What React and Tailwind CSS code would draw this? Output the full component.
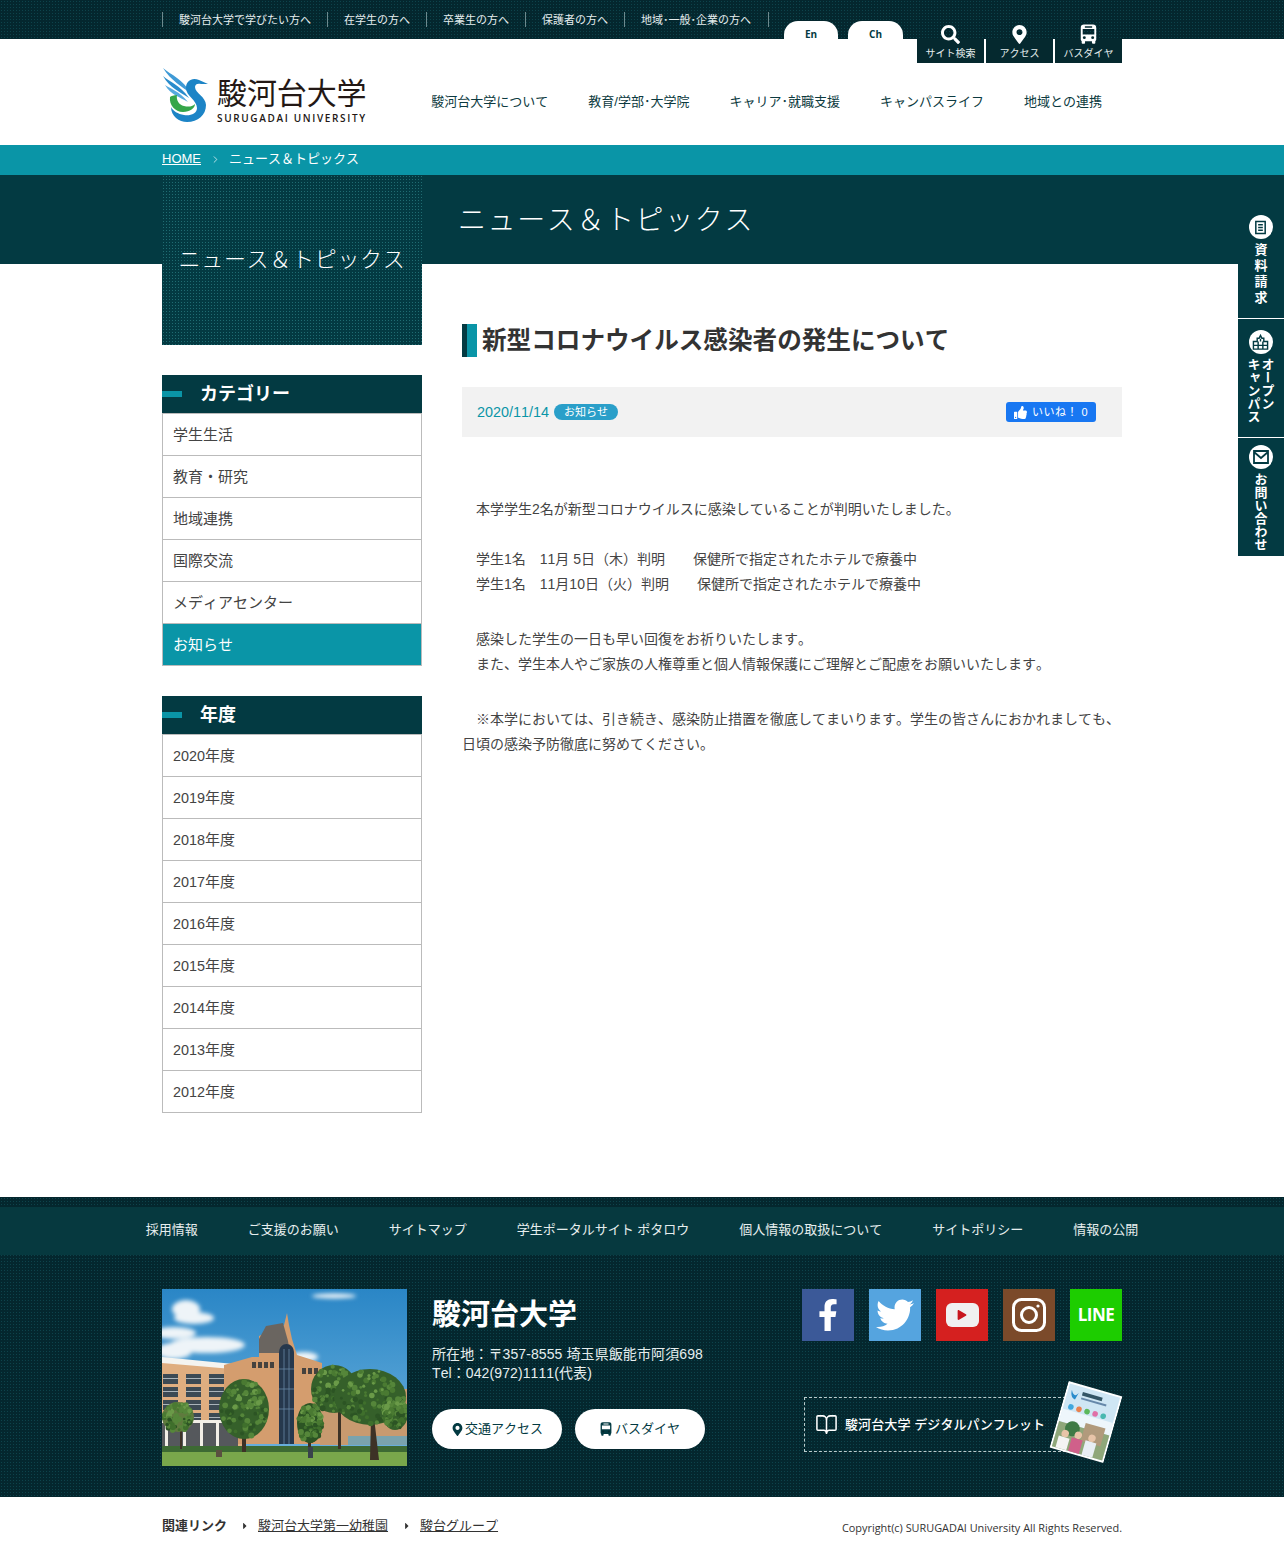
import React from "react";
import { ChevronRight, BookOpen } from "lucide-react";
import { FaSearch, FaMapMarkerAlt, FaFacebookF, FaTwitter, FaThumbsUp, FaCaretRight, FaPlay } from "react-icons/fa";

const font = "font-['Liberation_Sans','Noto_Sans_CJK_JP',sans-serif] [font-kerning:none]";
const dotsDark = "bg-[#04272e] bg-[radial-gradient(#0d434b_0.7px,transparent_0.8px)] bg-[length:3px_3px]";
const dotsPanel = "bg-[#033a42] bg-[radial-gradient(#1f6c72_0.6px,transparent_0.7px)] bg-[length:3px_3px]";

const topLinks = ["駿河台大学で学びたい方へ", "在学生の方へ", "卒業生の方へ", "保護者の方へ", "地域･一般･企業の方へ"];
const mainNav = ["駿河台大学について", "教育/学部･大学院", "キャリア･就職支援", "キャンパスライフ", "地域との連携"];
const categories = ["学生生活", "教育・研究", "地域連携", "国際交流", "メディアセンター", "お知らせ"];
const years = ["2020年度", "2019年度", "2018年度", "2017年度", "2016年度", "2015年度", "2014年度", "2013年度", "2012年度"];
const footerNav = ["採用情報", "ご支援のお願い", "サイトマップ", "学生ポータルサイト ポタロウ", "個人情報の取扱について", "サイトポリシー", "情報の公開"];

function BusIcon({ className }) {
  return (
    <svg viewBox="0 0 18 22" className={className} fill="currentColor">
      <path d="M4 0.5 H14 C16.2 0.5 17.5 1.8 17.5 4 V17 C17.5 18 17 18.5 16.5 18.7 V20.5 C16.5 21.3 16 21.7 15.2 21.7 H14 C13.2 21.7 12.8 21.3 12.8 20.5 V19 H5.2 V20.5 C5.2 21.3 4.8 21.7 4 21.7 H2.8 C2 21.7 1.5 21.3 1.5 20.5 V18.7 C1 18.5 0.5 18 0.5 17 V4 C0.5 1.8 1.8 0.5 4 0.5Z M5 2.4 V4 H13 V2.4Z M2.6 5.6 V11.5 H15.4 V5.6Z" fillRule="evenodd" />
      <circle cx="4.4" cy="15" r="1.6" fill="#05292f" /><circle cx="13.6" cy="15" r="1.6" fill="#05292f" />
    </svg>
  );
}

function Swan() {
  return (
    <svg viewBox="0 0 46 56" className="w-[46px] h-[56px] shrink-0">
      <path d="M1 2 C9 9 21 13 29 28 C20 20 9 15 1 2Z" fill="#3f9ad6" />
      <path d="M1 10 C8 16 18 19 27 32 C18 26 8 22 1 10Z" fill="#2a8ccc" />
      <path d="M3 19 C9 23 17 25 26 36 C18 31 9 29 3 19Z" fill="#57aadf" />
      <path d="M46 18 L37 14 C30 11 24 15 24 22 C24 30 35 34 35 42 C35 48 28 50 22 49 C16 48 11 45 9 41 C9 50 17 56 25 56 C36 56 44 49 44 39 C44 31 33 27 33 21 C33 18 36 17 39 18Z" fill="#1c84c6" />
      <path d="M8 31 C7 39 13 46 21 46 C28 46 33 42 33 38 C30 41 26 41 22 40 C17 39 14 34 15 29 C12 29 9 30 8 31Z" fill="#35a64a" />
    </svg>
  );
}

function Leaves({ cx, cy, rx, ry, seed, base = "#35602a" }) {
  const rnd = (n) => {
    const v = Math.sin(n * 12.9898 + seed * 78.233) * 43758.5453;
    return v - Math.floor(v);
  };
  const colors = ["#2c5424", "#3f6f2c", "#55863a", "#6a9a48", "#4a7a32"];
  const out = [];
  for (let i = 0; i < 90; i++) {
    const a = rnd(i) * 6.283;
    const d = Math.sqrt(rnd(i + 100)) * 0.95;
    const x = cx + Math.cos(a) * d * rx;
    const y = cy + Math.sin(a) * d * ry;
    const lit = y < cy ? 2 : 0;
    out.push(<circle key={i} cx={x} cy={y} r={1.2 + rnd(i + 200) * 1.8} fill={colors[Math.min(4, Math.floor(rnd(i + 300) * 3) + lit)]} />);
  }
  return (
    <g>
      <ellipse cx={cx} cy={cy} rx={rx} ry={ry} fill={base} />
      {out}
    </g>
  );
}

function Campus() {
  const win = [];
  for (let c = 0; c < 4; c++) for (let r = 0; r < 4; r++) {
    win.push(<g key={c + "-" + r}><rect x={1 + c * 23} y={85 + r * 13} width={15} height="10" fill="#3c4a54" /><rect x={1 + c * 23} y={89 + r * 13} width={15} height="1" fill="#aab4ba" /></g>);
  }
  return (
    <svg viewBox="0 0 245 177" preserveAspectRatio="none" className="w-[245px] h-[177px] block shrink-0">
      <defs>
        <linearGradient id="sky" x1="0" y1="0" x2="0" y2="1"><stop offset="0" stopColor="#2a86c6" /><stop offset="1" stopColor="#6fb3de" /></linearGradient>
        <filter id="soft"><feGaussianBlur stdDeviation="2.2" /></filter>
      </defs>
      <rect width="245" height="177" fill="url(#sky)" />
      <g fill="#eef4f8" filter="url(#soft)">
        <ellipse cx="24" cy="20" rx="14" ry="9" /><ellipse cx="32" cy="29" rx="20" ry="6" /><ellipse cx="12" cy="44" rx="22" ry="6" /><ellipse cx="45" cy="56" rx="38" ry="8" /><ellipse cx="12" cy="62" rx="18" ry="8" />
        <ellipse cx="172" cy="7" rx="22" ry="2.5" /><ellipse cx="142" cy="68" rx="14" ry="5" />
      </g>
      <path d="M0 71 L82 80 L82 160 L0 160Z" fill="#dfae80" />
      <path d="M0 68 L82 76 L82 81 L0 74Z" fill="#f4f4f0" />
      {win}
      <path d="M62 76 L90 68 L97 68 L97 47 L122 36 L125 24 L127 36 L130 50 L135 66 L160 74 L160 155 L62 155Z" fill="#d49d6e" />
      <path d="M97 50 L104 37 L121 34 L126 52 L128 64 L97 64Z" fill="#6a6560" />
      <path d="M117 64 C117 52 132 52 132 64 L132 155 L117 155Z" fill="#26384d" />
      <path d="M122 60 V155 M127 60 V155 M117 80 H132 M117 100 H132 M117 120 H132" stroke="#6788a5" strokeWidth="0.8" />
      <g fill="#45423e"><rect x="90" y="73" width="4" height="6" /><rect x="96" y="73" width="4" height="6" /><rect x="102" y="73" width="4" height="6" /><rect x="108" y="73" width="4" height="6" /><rect x="140" y="79" width="4" height="6" /><rect x="146" y="79" width="4" height="6" /><rect x="152" y="79" width="4" height="6" /></g>
      <rect x="0" y="134" width="76" height="24" fill="#55585c" />
      <g fill="#f2eee6"><rect x="3" y="134" width="3" height="25" /><rect x="21" y="134" width="3" height="25" /><rect x="38" y="134" width="3" height="25" /><rect x="54" y="134" width="3" height="25" /></g>
      <rect x="0" y="131" width="78" height="3" fill="#f2eee6" />
      <rect x="158" y="100" width="87" height="56" fill="#c89a6f" />
      <rect x="186" y="147" width="59" height="9" fill="#7aa3ad" />
      <rect y="162" width="245" height="15" fill="#79a74b" />
      <rect y="157" width="245" height="6" fill="#3d6a33" />
      <path d="M80 145 h4 v18 h-4Z M146 150 h3 v14 h-3Z M18 140 h2 v20 h-2Z M209 128 l3 0 l5 43 h-9Z M176 118 h3 v42 h-3Z" fill="#3d3226" />
      <Leaves cx={16} cy={128} rx={16} ry={15} seed={3} base="#5f7a3e" />
      <Leaves cx={82} cy={120} rx={25} ry={30} seed={5} />
      <Leaves cx={148} cy={134} rx={13} ry={20} seed={8} base="#2c5424" />
      <Leaves cx={172} cy={100} rx={23} ry={24} seed={13} />
      <Leaves cx={208} cy={108} rx={36} ry={28} seed={21} />
      <Leaves cx={233} cy={124} rx={13} ry={17} seed={2} />
      <rect x="54" y="161" width="6" height="7" fill="#5a5040" /><rect x="146" y="158" width="5" height="11" fill="#39424c" />
    </svg>
  );
}

function Pamphlet() {
  return (
    <svg viewBox="0 0 60 74" className="w-[56px] h-[74px] rotate-[16deg] block">
      <rect width="60" height="74" fill="#fff" />
      <rect x="2" y="2" width="56" height="70" fill="#cfe6f4" />
      <rect x="2" y="30" width="56" height="14" fill="#eef6fb" />
      <path d="M6 8 c3 6 6 6 8 1 l-2 8 c-3 0 -6 -3 -6 -9Z" fill="#2a8ccc" />
      <rect x="18" y="7" width="22" height="4" fill="#356" /><rect x="18" y="13" width="28" height="2" fill="#68a" />
      <circle cx="10" cy="26" r="3" fill="#3fa7dd" /><circle cx="19" cy="26" r="3" fill="#e9814f" /><circle cx="28" cy="26" r="3" fill="#5cb85c" /><circle cx="37" cy="26" r="3" fill="#e06fa7" /><circle cx="46" cy="26" r="3" fill="#49b8b0" />
      <rect x="2" y="44" width="56" height="28" fill="#8fa77a" />
      <rect x="30" y="38" width="22" height="20" fill="#b19a7c" />
      <circle cx="18" cy="48" r="8" fill="#3f7a46" />
      <circle cx="26" cy="53" r="4" fill="#e8c4a8" /><rect x="20" y="57" width="12" height="15" fill="#d0608a" />
      <circle cx="41" cy="52" r="4" fill="#e8c4a8" /><rect x="35" y="56" width="12" height="16" fill="#e8eef4" />
      <circle cx="12" cy="55" r="4" fill="#e8c4a8" /><rect x="6" y="59" width="12" height="13" fill="#f4f4f4" />
    </svg>
  );
}

function SideHead({ children }) {
  return (
    <div className="h-[38px] bg-[#033a42] flex items-center">
      <span className="w-5 h-[6px] bg-[#0a95a7]" />
      <span className="ml-[18px] text-white text-[18px] font-bold">{children}</span>
    </div>
  );
}

function SideList({ items, active }) {
  return (
    <ul className="border-x border-[#bbbbbb] border-t border-t-[#bbbbbb]">
      {items.map((t) => (
        <li key={t} className={"h-[42px] border-b border-[#bbbbbb] px-[10px] pt-[2px] flex items-center text-[15px] " + (t === active ? "bg-[#0a95a7] text-white" : "bg-white text-[#444]")}>
          {/^\d/.test(t) ? <span><span className="text-[14.4px]">{t.slice(0, 4)}</span>{t.slice(4)}</span> : t}
        </li>
      ))}
    </ul>
  );
}

function SideTab({ icon, children, className }) {
  return (
    <div className={"w-[46px] bg-[#033a42] flex flex-col items-center text-white " + className}>
      <span className="w-[24px] h-[24px] rounded-full bg-white text-[#033a42] flex items-center justify-center shrink-0 -ml-[1px]">{icon}</span>
      <span className="mt-[4px] -ml-[3px] [writing-mode:vertical-rl] text-[13px] font-bold leading-[14px]">{children}</span>
    </div>
  );
}

export default function App() {
  return (
    <div className={"relative w-full h-[1556px] overflow-hidden bg-white text-[#333] " + font}>
      <header>
        <div className={"h-[39px] " + dotsDark}>
          <div className="w-[960px] mx-auto flex items-start justify-between relative z-10">
            <ul className="flex mt-[12px] border-r border-[#6d8a8e] h-[15px]">
              {topLinks.map((t) => (
                <li key={t} className="border-l border-[#6d8a8e] px-4 last:pr-[17px] text-[11px] leading-[17px] text-[#e6eeee] whitespace-nowrap">{t}</li>
              ))}
            </ul>
            <div className="flex items-start">
              <div className="flex gap-[10px] mt-[21px] mr-[14px]">
                <span className="w-[54px] h-[18px] pt-[6px] bg-white rounded-t-[14px] text-center text-[10px] leading-[14px] font-bold font-['Open_Sans'] text-[#033a42]">En</span>
                <span className="w-[55px] h-[18px] pt-[6px] bg-white rounded-t-[14px] text-center text-[10px] leading-[14px] font-bold font-['Open_Sans'] text-[#033a42]">Ch</span>
              </div>
              <div className="flex gap-[2px] h-[63px]">
                {[[<FaSearch key="s" className="text-[19px]" />, "サイト検索"], [<FaMapMarkerAlt key="m" className="text-[19px]" />, "アクセス"], [<BusIcon key="b" className="w-[17px] h-[20px] -mt-[1px]" />, "バスダイヤ"]].map(([ic, l]) => (
                  <div key={l} className="w-[67px] h-[63px] flex flex-col items-center pt-[25px] text-white bg-[linear-gradient(transparent_39px,#05292f_39px)]">
                    <span className="h-[19px] flex items-center">{ic}</span>
                    <span className="mt-[3px] text-[10px] leading-[14px] text-[#e6eeee] whitespace-nowrap">{l}</span>
                  </div>
                ))}
              </div>
            </div>
          </div>
        </div>
        <div className="h-[106px] w-[960px] mx-auto flex items-start justify-between">
          <div className="flex mt-[27px]">
            <Swan />
            <div className="ml-[9px] mt-[8px]">
              <div className="text-[30px] leading-[34px] font-normal text-[#231815] font-['Noto_Sans_CJK_JP'] tracking-[-0.1px]">駿河台大学</div>
              <div className="mt-[4px] text-[10px] leading-[13px] font-['Open_Sans'] font-semibold tracking-[1.65px] text-[#231815] whitespace-nowrap">SURUGADAI UNIVERSITY</div>
            </div>
          </div>
          <nav className="flex gap-[40px] mr-[20px] mt-[54px] text-[13px] leading-[17px] text-[#0c3a40]">
            {mainNav.map((t) => <span key={t} className="whitespace-nowrap">{t}</span>)}
          </nav>
        </div>
      </header>

      <div className="h-[30px] bg-[#0a95a7]">
        <div className="w-[960px] mx-auto h-full flex items-center pb-[2px] text-white text-[13px]">
          <span className="underline">HOME</span>
          <ChevronRight className="w-[11px] h-[11px] ml-[9px] mr-[8px] text-white" strokeWidth={1.5} />
          <span>ニュース＆トピックス</span>
        </div>
      </div>

      <div className="h-[89px] bg-[#033a42]" />
      <div className="w-[960px] mx-auto -mt-[89px] flex gap-[40px] items-start">
        <aside className="w-[260px] shrink-0">
          <div className={"h-[170px] pt-[70px] text-center text-white text-[22px] leading-[30px] tracking-[0.7px] whitespace-nowrap font-light " + dotsPanel}>ニュース＆トピックス</div>
          <div className="mt-[30px]">
            <SideHead>カテゴリー</SideHead>
            <SideList items={categories} active="お知らせ" />
          </div>
          <div className="mt-[30px]">
            <SideHead>年度</SideHead>
            <SideList items={years} />
          </div>
        </aside>
        <main className="w-[660px]">
          <div className="h-[89px] pt-[3px] flex items-center text-white text-[28px] tracking-[1.6px] font-light whitespace-nowrap -ml-[4px]">ニュース＆トピックス</div>
          <div className="mt-[60px] flex items-center h-[33px]">
            <span className="w-[5px] h-[33px] bg-[#033a42]" />
            <span className="w-[10px] h-[33px] bg-[#0a95a7]" />
            <h1 className="ml-[5px] text-[24.6px] font-bold leading-[33px] text-[#333] whitespace-nowrap">新型コロナウイルス感染者の発生について</h1>
          </div>
          <div className="mt-[30px] h-[50px] bg-[#f2f2f2] pl-[15px] pr-[26px] flex items-center justify-between">
            <div className="flex items-center">
              <span className="text-[14.4px] pt-[2px] text-[#0a95a7]">2020/11/14</span>
              <span className="ml-[5px] w-[64px] h-[16px] rounded-full bg-[#2a9fc9] text-white text-[11px] leading-[16px] text-center">お知らせ</span>
            </div>
            <span className="w-[90px] h-[20px] rounded-[3px] bg-[#1877f2] text-white text-[11px] flex items-center pl-[8px]">
              <FaThumbsUp className="text-[13px] mr-[5px]" />
              <span className="tracking-[0.5px]">いいね！ 0</span>
            </span>
          </div>
          <div className="mt-[60px] text-[14px] leading-[25px] text-[#444]">
            <p>　本学学生2名が新型コロナウイルスに感染していることが判明いたしました。</p>
            <p className="mt-[25px]">　学生1名　11月 5日（木）判明　　保健所で指定されたホテルで療養中<br />　学生1名　11月10日（火）判明　　保健所で指定されたホテルで療養中</p>
            <p className="mt-[30px]">　感染した学生の一日も早い回復をお祈りいたします。<br />　また、学生本人やご家族の人権尊重と個人情報保護にご理解とご配慮をお願いいたします。</p>
            <p className="mt-[30px]">　※本学においては、引き続き、感染防止措置を徹底してまいります。学生の皆さんにおかれましても、日頃の感染予防徹底に努めてください。</p>
          </div>
        </main>
      </div>

      <footer className="absolute top-[1197px] inset-x-0">
        <div className={"h-[300px] " + dotsDark}>
          <div className="h-[10px]" />
          <div className="h-[48px] pb-[2px] bg-[#06393f] flex items-center justify-center gap-[50px] text-[13px] text-[#e6eeee]">
            {footerNav.map((t) => <span key={t} className="whitespace-nowrap">{t}</span>)}
          </div>
          <div className="w-[960px] mx-auto pt-[34px] flex">
            <Campus />
            <div className="ml-[25px] w-[370px]">
              <div className="mt-[1px] text-[29px] leading-[50px] font-bold text-white">駿河台大学</div>
              <div className="mt-[5px] text-[14px] tracking-[0.1px] leading-[19px] text-[#e6eeee]">所在地：〒357-8555 埼玉県飯能市阿須698<br />Tel：042(972)1111(代表)</div>
              <div className="mt-[26px] flex gap-[13px]">
                <span className="w-[130px] h-[40px] rounded-full bg-white flex items-center justify-center text-[13px] text-[#033a42]"><FaMapMarkerAlt className="text-[13px] mr-[1px]" />交通アクセス</span>
                <span className="w-[130px] h-[40px] rounded-full bg-white flex items-center justify-center text-[13px] text-[#033a42]"><BusIcon className="w-[12px] h-[14px] mr-[3px] text-[#033a42]" />バスダイヤ</span>
              </div>
            </div>
            <div className="flex-1 relative">
              <div className="flex justify-between">
                <span className="w-[52px] h-[52px] bg-[#3b5998] flex items-center justify-center text-white text-[32px]"><FaFacebookF /></span>
                <span className="w-[52px] h-[52px] bg-[#55a4df] flex items-center justify-center text-white text-[38px]"><FaTwitter /></span>
                <span className="w-[52px] h-[52px] bg-[#d5201f] flex items-center justify-center">
                  <span className="w-[33px] h-[24px] rounded-[6px] bg-[#f0f0f0] flex items-center justify-center text-[#c8161d] text-[10px]"><FaPlay /></span>
                </span>
                <span className="w-[52px] h-[52px] bg-[#7b4a2a] flex items-center justify-center">
                  <svg viewBox="0 0 34 34" className="w-[34px] h-[34px]" fill="none" stroke="#fff" strokeWidth="3"><rect x="1.5" y="1.5" width="31" height="31" rx="8" /><circle cx="17" cy="17" r="7.5" /><circle cx="26" cy="8" r="1.6" fill="#fff" stroke="none" /></svg>
                </span>
                <span className="w-[52px] h-[52px] bg-[#1dcd00] flex items-center justify-center text-white text-[17px] font-bold font-['Open_Sans'] tracking-[-0.5px]">LINE</span>
              </div>
              <div className="mt-[56px] ml-[2px] w-[262px] h-[55px] border border-dashed border-[#b9cccc] flex items-center pl-[10px] text-white text-[13px] font-medium whitespace-nowrap">
                <BookOpen className="w-[23px] h-[23px] mr-[7px]" strokeWidth={1.6} />
                <span className="tracking-[0.1px]">駿河台大学 デジタルパンフレット</span>
              </div>
              <div className="absolute right-[8px] top-[96px]"><Pamphlet /></div>
            </div>
          </div>
        </div>
        <div className="h-[59px] pb-[2px] w-[960px] mx-auto flex items-center justify-between text-[13px] text-[#333]">
          <div className="flex items-center">
            <span className="font-bold">関連リンク</span>
            <FaCaretRight className="ml-[13px] mr-[8px] text-[10px]" />
            <span className="underline">駿河台大学第一幼稚園</span>
            <FaCaretRight className="ml-[14px] mr-[8px] text-[10px]" />
            <span className="underline">駿台グループ</span>
          </div>
          <span className="text-[10.9px] font-['Open_Sans'] mt-[5px]">Copyright(c) SURUGADAI University All Rights Reserved.</span>
        </div>
      </footer>

      <div className="absolute top-[200px] right-0 flex flex-col gap-[1px]">
        <SideTab className="h-[118px] pt-[15px]" icon={
          <svg viewBox="0 0 16 16" className="w-[15px] h-[15px]" fill="none" stroke="currentColor" strokeWidth="1.6"><path d="M3 1.5 H13 V14.5 H3Z M5.5 5 H10.5 M5.5 8 H10.5 M5.5 11 H10.5" /></svg>
        }><span className="tracking-[3px]">資料請求</span></SideTab>
        <SideTab className="h-[118px] pt-[11px]" icon={
          <svg viewBox="0 0 18 18" className="w-[17px] h-[17px]" fill="none" stroke="currentColor" strokeWidth="1.5"><path d="M1.5 16 V8 H5.5 V4.5 H7.5 L9 1.5 L10.5 4.5 H12.5 V8 H16.5 V16Z M1.5 12 H16.5 M6.5 8 V16 M11.5 8 V16 M9 5 V8" /></svg>
        }>オープン<br />キャンパス</SideTab>
        <SideTab className="h-[118px] pt-[7px]" icon={
          <svg viewBox="0 0 16 14" className="w-[16px] h-[14px]" fill="none" stroke="currentColor" strokeWidth="1.8"><path d="M1 1 H15 V13 H1Z M1 2 L8 8 L15 2" /></svg>
        }>お問い合わせ</SideTab>
      </div>
    </div>
  );
}
